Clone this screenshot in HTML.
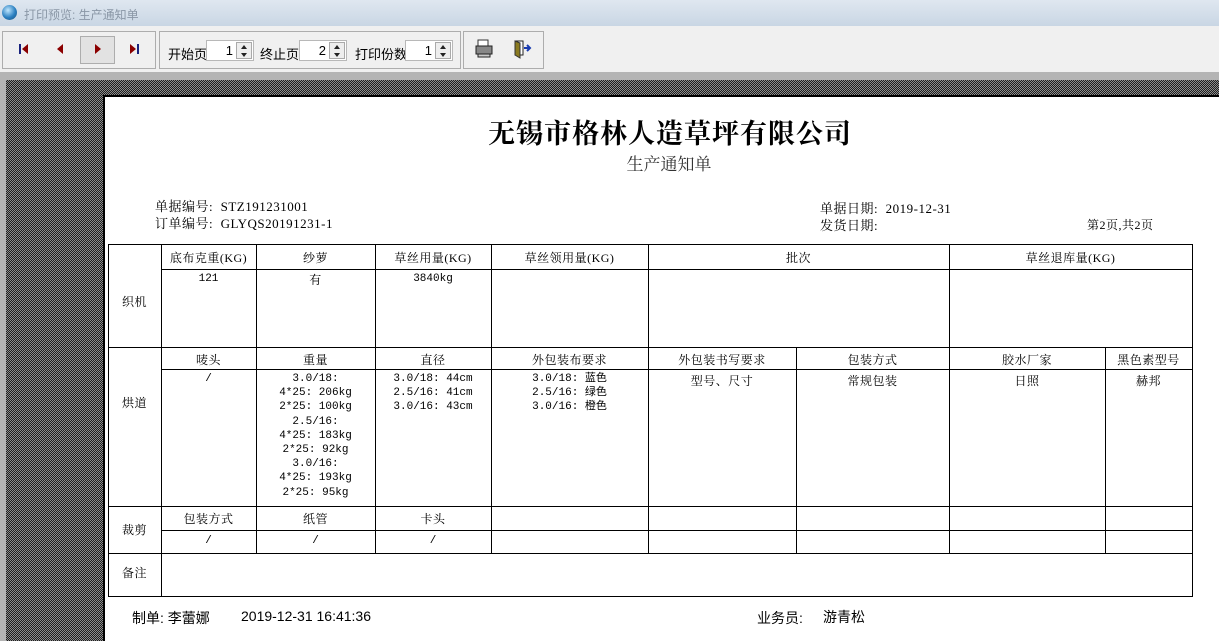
<!DOCTYPE html>
<html><head><meta charset="utf-8"><style>
*{margin:0;padding:0;box-sizing:border-box}
body{width:1219px;height:641px;overflow:hidden;position:relative;background:#f0f0f0;font-family:"Liberation Sans","Noto Sans CJK SC",sans-serif}
.a{position:absolute}
.title{left:0;top:0;width:1219px;height:26px;background:linear-gradient(#dfe7f0,#c9d6e4);color:#8a97a6;font-size:12px}
.grp{border:1px solid #adadad;top:31px;height:38px;background:#f0f0f0}
.spin{top:40px;height:21px;width:48px;background:#fff;border:1px solid #b8b8b8;font-size:13px}
.spin span{position:absolute;right:20px;top:2px}
.spin i{position:absolute;right:1px;top:1px;width:16px;height:17px;border:1px solid #aaa;background:#eee}
.spin i:before{content:"";position:absolute;left:4px;top:2px;border:3px solid transparent;border-bottom:4px solid #222;border-top:0}
.spin i:after{content:"";position:absolute;left:4px;top:10px;border:3px solid transparent;border-top:4px solid #222;border-bottom:0}
.lbl{top:44px;font-size:13px;color:#000}
.bg{left:6px;top:80px;width:1213px;height:561px;background-color:#555;background-image:repeating-conic-gradient(#1e1e1e 0 25%,#8c8c8c 0 50%);background-size:2px 2px}
.page{left:103px;top:95px;width:1116px;height:546px;background:#fff;border-left:2px solid #000;border-top:2px solid #000}
.h{height:1px;background:#000}
.v{width:1px;background:#000}
.t{font-family:"Liberation Serif","Noto Serif CJK SC",serif;font-size:12px;color:#000;text-align:center;white-space:nowrap;letter-spacing:0.5px}
.m{font-family:"Liberation Mono","Noto Sans CJK SC",monospace;font-size:11px;line-height:14.2px;letter-spacing:0}
</style></head><body>
<div class="a title">
 <div class="a" style="left:2px;top:5px;width:15px;height:15px;border-radius:50%;background:radial-gradient(circle at 40% 35%,#bfe7ff,#2a7fc0 55%,#1c4f7a)"></div>
 <div class="a" style="left:24px;top:6px">打印预览: 生产通知单</div>
</div>
<div class="a" style="left:0;top:26px;width:1219px;height:46px;background:#f0f0f0"></div>
<div class="a grp" style="left:2px;width:154px"></div>
<div class="a grp" style="left:159px;width:302px"></div>
<div class="a grp" style="left:463px;width:81px"></div>
<div class="a" style="left:80px;top:36px;width:35px;height:28px;background:#e2e2e2;border:1px solid #adadad"></div>
<svg class="a" style="left:0;top:26px" width="160" height="46">
 <rect x="19" y="18" width="2" height="10" fill="#1a237e"/><path d="M28 18v10l-6-5z" fill="#8b0000"/>
 <path d="M63 18v10l-6-5z" fill="#8b0000"/>
 <path d="M95 18v10l6-5z" fill="#8b0000"/>
 <path d="M130 18v10l6-5z" fill="#8b0000"/><rect x="137" y="18" width="2" height="10" fill="#1a237e"/>
</svg>
<div class="a lbl" style="left:168px">开始页</div>
<div class="a spin" style="left:206px"><span>1</span><i></i></div>
<div class="a lbl" style="left:260px">终止页</div>
<div class="a spin" style="left:299px"><span>2</span><i></i></div>
<div class="a lbl" style="left:355px">打印份数</div>
<div class="a spin" style="left:405px"><span>1</span><i></i></div>
<svg class="a" style="left:470px;top:36px" width="70" height="28">
 <rect x="8" y="4" width="10" height="6" fill="#fff" stroke="#333"/><rect x="6" y="10" width="16" height="8" fill="#888" stroke="#222"/><rect x="8" y="18" width="12" height="3" fill="#ccc" stroke="#222"/>
 <rect x="45" y="5" width="8" height="14" fill="#fff" stroke="#222"/><path d="M45 5l5 2v15l-5-3z" fill="#8a7a20" stroke="#333"/><path d="M54 12h6M57 9l3 3-3 3" stroke="#1a3cb0" stroke-width="2" fill="none"/>
</svg>
<div class="a" style="left:0;top:72px;width:1219px;height:569px;background:#b4b4b4"></div>
<div class="a bg"></div>
<div class="a page"></div>

<div class="a" style="left:0;top:112px;width:1340px;text-align:center;font-family:'Liberation Serif','Noto Serif CJK SC',serif;font-size:27px;font-weight:bold;color:#000;letter-spacing:1px">无锡市格林人造草坪有限公司</div>
<div class="a" style="left:0;top:150px;width:1338px;text-align:center;font-family:'Liberation Serif','Noto Serif CJK SC',serif;font-size:17px;color:#333">生产通知单</div>
<div class="a t" style="left:155px;top:196px;text-align:left;font-size:13px">单据编号: &nbsp;STZ191231001</div>
<div class="a t" style="left:155px;top:213px;text-align:left;font-size:13px">订单编号: &nbsp;GLYQS20191231-1</div>
<div class="a t" style="left:820px;top:198px;text-align:left;font-size:13px">单据日期: &nbsp;2019-12-31</div>
<div class="a t" style="left:820px;top:215px;text-align:left;font-size:13px">发货日期:</div>
<div class="a t" style="left:1087px;top:216px;font-size:12px">第2页,共2页</div>

<div class="a h" style="left:108px;top:244px;width:1085px"></div>
<div class="a h" style="left:161px;top:269px;width:1032px"></div>
<div class="a h" style="left:108px;top:347px;width:1085px"></div>
<div class="a h" style="left:161px;top:369px;width:1032px"></div>
<div class="a h" style="left:108px;top:506px;width:1085px"></div>
<div class="a h" style="left:161px;top:530px;width:1032px"></div>
<div class="a h" style="left:108px;top:553px;width:1085px"></div>
<div class="a h" style="left:108px;top:596px;width:1085px"></div>
<div class="a v" style="left:108px;top:244px;height:353px"></div>
<div class="a v" style="left:1192px;top:244px;height:353px"></div>
<div class="a v" style="left:161px;top:244px;height:353px"></div>
<div class="a v" style="left:256px;top:244px;height:309px"></div>
<div class="a v" style="left:375px;top:244px;height:309px"></div>
<div class="a v" style="left:491px;top:244px;height:309px"></div>
<div class="a v" style="left:648px;top:244px;height:309px"></div>
<div class="a v" style="left:949px;top:244px;height:309px"></div>
<div class="a v" style="left:796px;top:347px;height:206px"></div>
<div class="a v" style="left:1105px;top:347px;height:206px"></div>

<div class="a t" style="left:108px;top:293px;width:53px">织机</div>
<div class="a t" style="left:108px;top:394px;width:53px">烘道</div>
<div class="a t" style="left:108px;top:521px;width:53px">裁剪</div>
<div class="a t" style="left:108px;top:564px;width:53px">备注</div>

<div class="a t" style="left:161px;top:249px;width:95px">底布克重(KG)</div>
<div class="a t" style="left:256px;top:249px;width:119px">纱萝</div>
<div class="a t" style="left:375px;top:249px;width:116px">草丝用量(KG)</div>
<div class="a t" style="left:491px;top:249px;width:157px">草丝领用量(KG)</div>
<div class="a t" style="left:648px;top:249px;width:301px">批次</div>
<div class="a t" style="left:949px;top:249px;width:243px">草丝退库量(KG)</div>
<div class="a t m" style="left:161px;top:272px;width:95px">121</div>
<div class="a t" style="left:256px;top:271px;width:119px">有</div>
<div class="a t m" style="left:375px;top:272px;width:116px">3840kg</div>

<div class="a t" style="left:161px;top:351px;width:95px">唛头</div>
<div class="a t" style="left:256px;top:351px;width:119px">重量</div>
<div class="a t" style="left:375px;top:351px;width:116px">直径</div>
<div class="a t" style="left:491px;top:351px;width:157px">外包装布要求</div>
<div class="a t" style="left:648px;top:351px;width:148px">外包装书写要求</div>
<div class="a t" style="left:796px;top:351px;width:153px">包装方式</div>
<div class="a t" style="left:949px;top:351px;width:156px">胶水厂家</div>
<div class="a t" style="left:1105px;top:351px;width:87px">黑色素型号</div>
<div class="a t m" style="left:161px;top:372px;width:95px">/</div>
<div class="a t m" style="left:256px;top:372px;width:119px">3.0/18:<br>4*25: 206kg<br>2*25: 100kg<br>2.5/16:<br>4*25: 183kg<br>2*25: 92kg<br>3.0/16:<br>4*25: 193kg<br>2*25: 95kg</div>
<div class="a t m" style="left:375px;top:372px;width:116px">3.0/18: 44cm<br>2.5/16: 41cm<br>3.0/16: 43cm</div>
<div class="a t m" style="left:491px;top:372px;width:157px">3.0/18: 蓝色<br>2.5/16: 绿色<br>3.0/16: 橙色</div>
<div class="a t" style="left:648px;top:372px;width:148px">型号、尺寸</div>
<div class="a t" style="left:796px;top:372px;width:153px">常规包装</div>
<div class="a t" style="left:949px;top:372px;width:156px">日照</div>
<div class="a t" style="left:1105px;top:372px;width:87px">赫邦</div>

<div class="a t" style="left:161px;top:510px;width:95px">包装方式</div>
<div class="a t" style="left:256px;top:510px;width:119px">纸管</div>
<div class="a t" style="left:375px;top:510px;width:116px">卡头</div>
<div class="a t m" style="left:161px;top:534px;width:95px">/</div>
<div class="a t m" style="left:256px;top:534px;width:119px">/</div>
<div class="a t m" style="left:375px;top:534px;width:116px">/</div>

<div class="a" style="left:132px;top:608px;font-size:14px;color:#000">制单: 李蕾娜</div>
<div class="a" style="left:241px;top:608px;font-size:14px;color:#000">2019-12-31 16:41:36</div>
<div class="a" style="left:757px;top:608px;font-size:14px;color:#000">业务员:</div>
<div class="a" style="left:823px;top:607px;font-size:14px;color:#000">游青松</div>
</body></html>
